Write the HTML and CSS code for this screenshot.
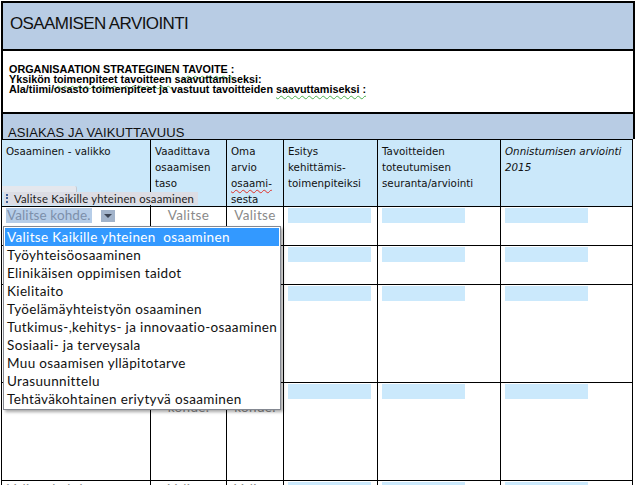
FILE: index.html
```html
<!DOCTYPE html>
<html lang="fi">
<head>
<meta charset="utf-8">
<title>Osaamisen arviointi</title>
<link rel="stylesheet" href="styles.css">
</head>
<body>
<div class="sheet">
  <div class="title">OSAAMISEN ARVIOINTI</div>
  <div class="goals">
    <p>ORGANISAATION STRATEGINEN <span class="gram">TAVOITE :</span></p>
    <p>Yksikön <span class="gram">toimenpiteet</span> <span class="gram">tavoitteen</span> saavuttamiseksi:</p>
    <p>Ala/tiimi/osasto toimenpiteet ja vastuut tavoitteiden <span class="gram">saavuttamiseksi :</span></p>
  </div>
  <div class="band">ASIAKAS JA VAIKUTTAVUUS</div>
  <div class="grid">
    <div class="hd">Osaaminen - valikko</div>
    <div class="hd">Vaadittava<br>osaamisen<br>taso</div>
    <div class="hd">Oma<br>arvio<br><span class="spell">osaami-</span><br>sesta</div>
    <div class="hd">Esitys<br>kehittämis-<br>toimenpiteiksi</div>
    <div class="hd">Tavoitteiden<br>toteutumisen<br>seuranta/arviointi</div>
    <div class="hd hd-it">Onnistumisen arviointi<br>2015</div>

    <div class="cell sel-cell"><span class="selected">Valitse kohde.</span><span class="arrow-btn"><span class="tri"></span></span></div>
    <div class="cell ph">Valitse kohde.</div>
    <div class="cell ph">Valitse kohde.</div>
    <div class="cell"><div class="field"></div></div>
    <div class="cell"><div class="field"></div></div>
    <div class="cell"><div class="field"></div></div>

    <div class="cell ph-left">Valitse kohde.</div>
    <div class="cell ph">Valitse kohde.</div>
    <div class="cell ph">Valitse kohde.</div>
    <div class="cell"><div class="field"></div></div>
    <div class="cell"><div class="field"></div></div>
    <div class="cell"><div class="field"></div></div>

    <div class="cell ph-left">Valitse kohde.</div>
    <div class="cell ph">Valitse kohde.</div>
    <div class="cell ph">Valitse kohde.</div>
    <div class="cell"><div class="field"></div></div>
    <div class="cell"><div class="field"></div></div>
    <div class="cell"><div class="field"></div></div>

    <div class="cell ph-left">Valitse kohde.</div>
    <div class="cell ph">Valitse kohde.</div>
    <div class="cell ph">Valitse kohde.</div>
    <div class="cell"><div class="field"></div></div>
    <div class="cell"><div class="field"></div></div>
    <div class="cell"><div class="field"></div></div>

    <div class="cell ph-left">Valitse kohde.</div>
    <div class="cell ph">Valitse kohde.</div>
    <div class="cell ph">Valitse kohde.</div>
    <div class="cell"><div class="field"></div></div>
    <div class="cell"><div class="field"></div></div>
    <div class="cell"><div class="field"></div></div>
  </div>

  <div class="cc-tab"></div>
  <div class="cc-label"><span class="handle"></span>Valitse Kaikille yhteinen osaaminen</div>

  <ul class="dropdown">
    <li class="active">Valitse Kaikille yhteinen&nbsp; osaaminen</li>
    <li>Työyhteisöosaaminen</li>
    <li>Elinikäisen oppimisen taidot</li>
    <li>Kielitaito</li>
    <li>Työelämäyhteistyön osaaminen</li>
    <li>Tutkimus-,kehitys- ja innovaatio-osaaminen</li>
    <li>Sosiaali- ja terveysala</li>
    <li>Muu osaamisen ylläpitotarve</li>
    <li>Urasuunnittelu</li>
    <li>Tehtäväkohtainen eriytyvä osaaminen</li>
  </ul>
</div>
</body>
</html>
```

FILE: styles.css
```css
html, body {
  margin: 0;
  padding: 0;
  background: #ffffff;
}
body {
  overflow: hidden;
  font-family: "Liberation Sans", Arial, sans-serif;
  color: #000;
}
.sheet {
  position: relative;
  width: 634px;
  margin: 1px 0 0 1px;
}
.title {
  box-sizing: border-box;
  height: 48px;
  border: 2px solid #000;
  border-bottom: none;
  background: #b8cce4;
  padding: 11px 0 0 7px;
  font-size: 17px;
  line-height: 20px;
  letter-spacing: -0.6px;
  color: #111;
}
.goals {
  box-sizing: border-box;
  height: 63px;
  border: 2px solid #000;
  border-bottom: none;
  padding: 13px 0 0 6px;
  font-weight: bold;
  font-size: 10.8px;
  line-height: 10px;
  letter-spacing: 0;
}
.goals p {
  margin: 0;
}
.gram {
  text-decoration: underline wavy #4caf50;
  text-decoration-thickness: 1px;
  text-underline-offset: 2px;
}
.spell {
  text-decoration: underline wavy #e0302a;
  text-decoration-thickness: 1px;
  text-underline-offset: 2px;
}
.band {
  box-sizing: border-box;
  height: 27px;
  border: 2px solid #000;
  border-bottom: none;
  background: #b8cce4;
  padding: 11px 0 0 5px;
  font-size: 13px;
  line-height: 16px;
  letter-spacing: 0.1px;
  color: #111;
}
.grid {
  display: grid;
  width: 632px;
  box-sizing: border-box;
  grid-template-columns: 148px 75px 56px 93px 122px 131px;
  grid-template-rows: 66px 38px 38px 97px 97px 60px;
  gap: 1px;
  padding: 1px;
  background: #000;
}
.hd {
  background: #cbe8fa;
  padding: 3px 3px 0 4px;
  font-family: "DejaVu Sans", Verdana, sans-serif;
  font-size: 10.3px;
  line-height: 16px;
  color: #111;
  overflow: hidden;
}
.hd-it {
  font-style: italic;
}
.cell {
  background: #fff;
  font-family: Lato, "Open Sans", sans-serif;
  font-size: 13.5px;
  letter-spacing: 0.35px;
  line-height: 16px;
  overflow: hidden;
}
.ph {
  color: #8a8a8a;
  text-align: center;
  padding: 0 2px;
}
.ph-left {
  color: #8a8a8a;
  padding-left: 5px;
}
.sel-cell {
  display: flex;
  align-items: flex-start;
  padding-left: 4px;
}
.selected {
  display: inline-block;
  margin-top: 1px;
  width: 86px;
  box-sizing: border-box;
  padding-left: 1px;
  height: 15px;
  line-height: 15px;
  background: #b6cde8;
  color: #7d90ab;
  letter-spacing: 0.1px;
  white-space: nowrap;
  overflow: hidden;
}
.arrow-btn {
  display: flex;
  align-items: center;
  justify-content: center;
  width: 14px;
  height: 12px;
  margin: 3px 0 0 9px;
  background: #a2b3ca;
}
.tri {
  width: 0;
  height: 0;
  border-left: 4px solid transparent;
  border-right: 4px solid transparent;
  border-top: 4px solid #3b4454;
}
.field {
  width: 83px;
  height: 15px;
  margin: 1px 0 0 4px;
  background: #cbe9fc;
}
.cc-tab {
  position: absolute;
  left: 1px;
  top: 185px;
  width: 74px;
  height: 6px;
  background: #e4e7ed;
  border-right: 1px solid #c5c9d2;
  border-top-right-radius: 2px;
}
.cc-label {
  position: absolute;
  left: 3px;
  top: 191px;
  width: 194px;
  height: 13px;
  box-sizing: border-box;
  padding-left: 10px;
  background: #dcdde4;
  font-family: Lato, "Open Sans", sans-serif;
  font-size: 11.3px;
  letter-spacing: 0.2px;
  line-height: 13px;
  color: #1b1b1b;
  white-space: nowrap;
  overflow: hidden;
}
.handle {
  position: absolute;
  left: 2px;
  top: 2px;
  width: 0;
  height: 9px;
  border-left: 2px dotted #41639a;
}
.dropdown {
  position: absolute;
  left: 2px;
  top: 225px;
  width: 278px;
  box-sizing: border-box;
  margin: 0;
  padding: 1px;
  list-style: none;
  background: #fff;
  border: 1px solid #848891;
  box-shadow: 2px 2px 3px rgba(0, 0, 0, 0.35);
  font-family: Lato, "Open Sans", sans-serif;
  font-size: 13.5px;
  letter-spacing: 0.35px;
  color: #111;
}
.dropdown li {
  height: 18px;
  line-height: 18px;
  padding-left: 2px;
  white-space: nowrap;
}
.dropdown li.active {
  background: #3399ff;
  color: #fff;
}
```
